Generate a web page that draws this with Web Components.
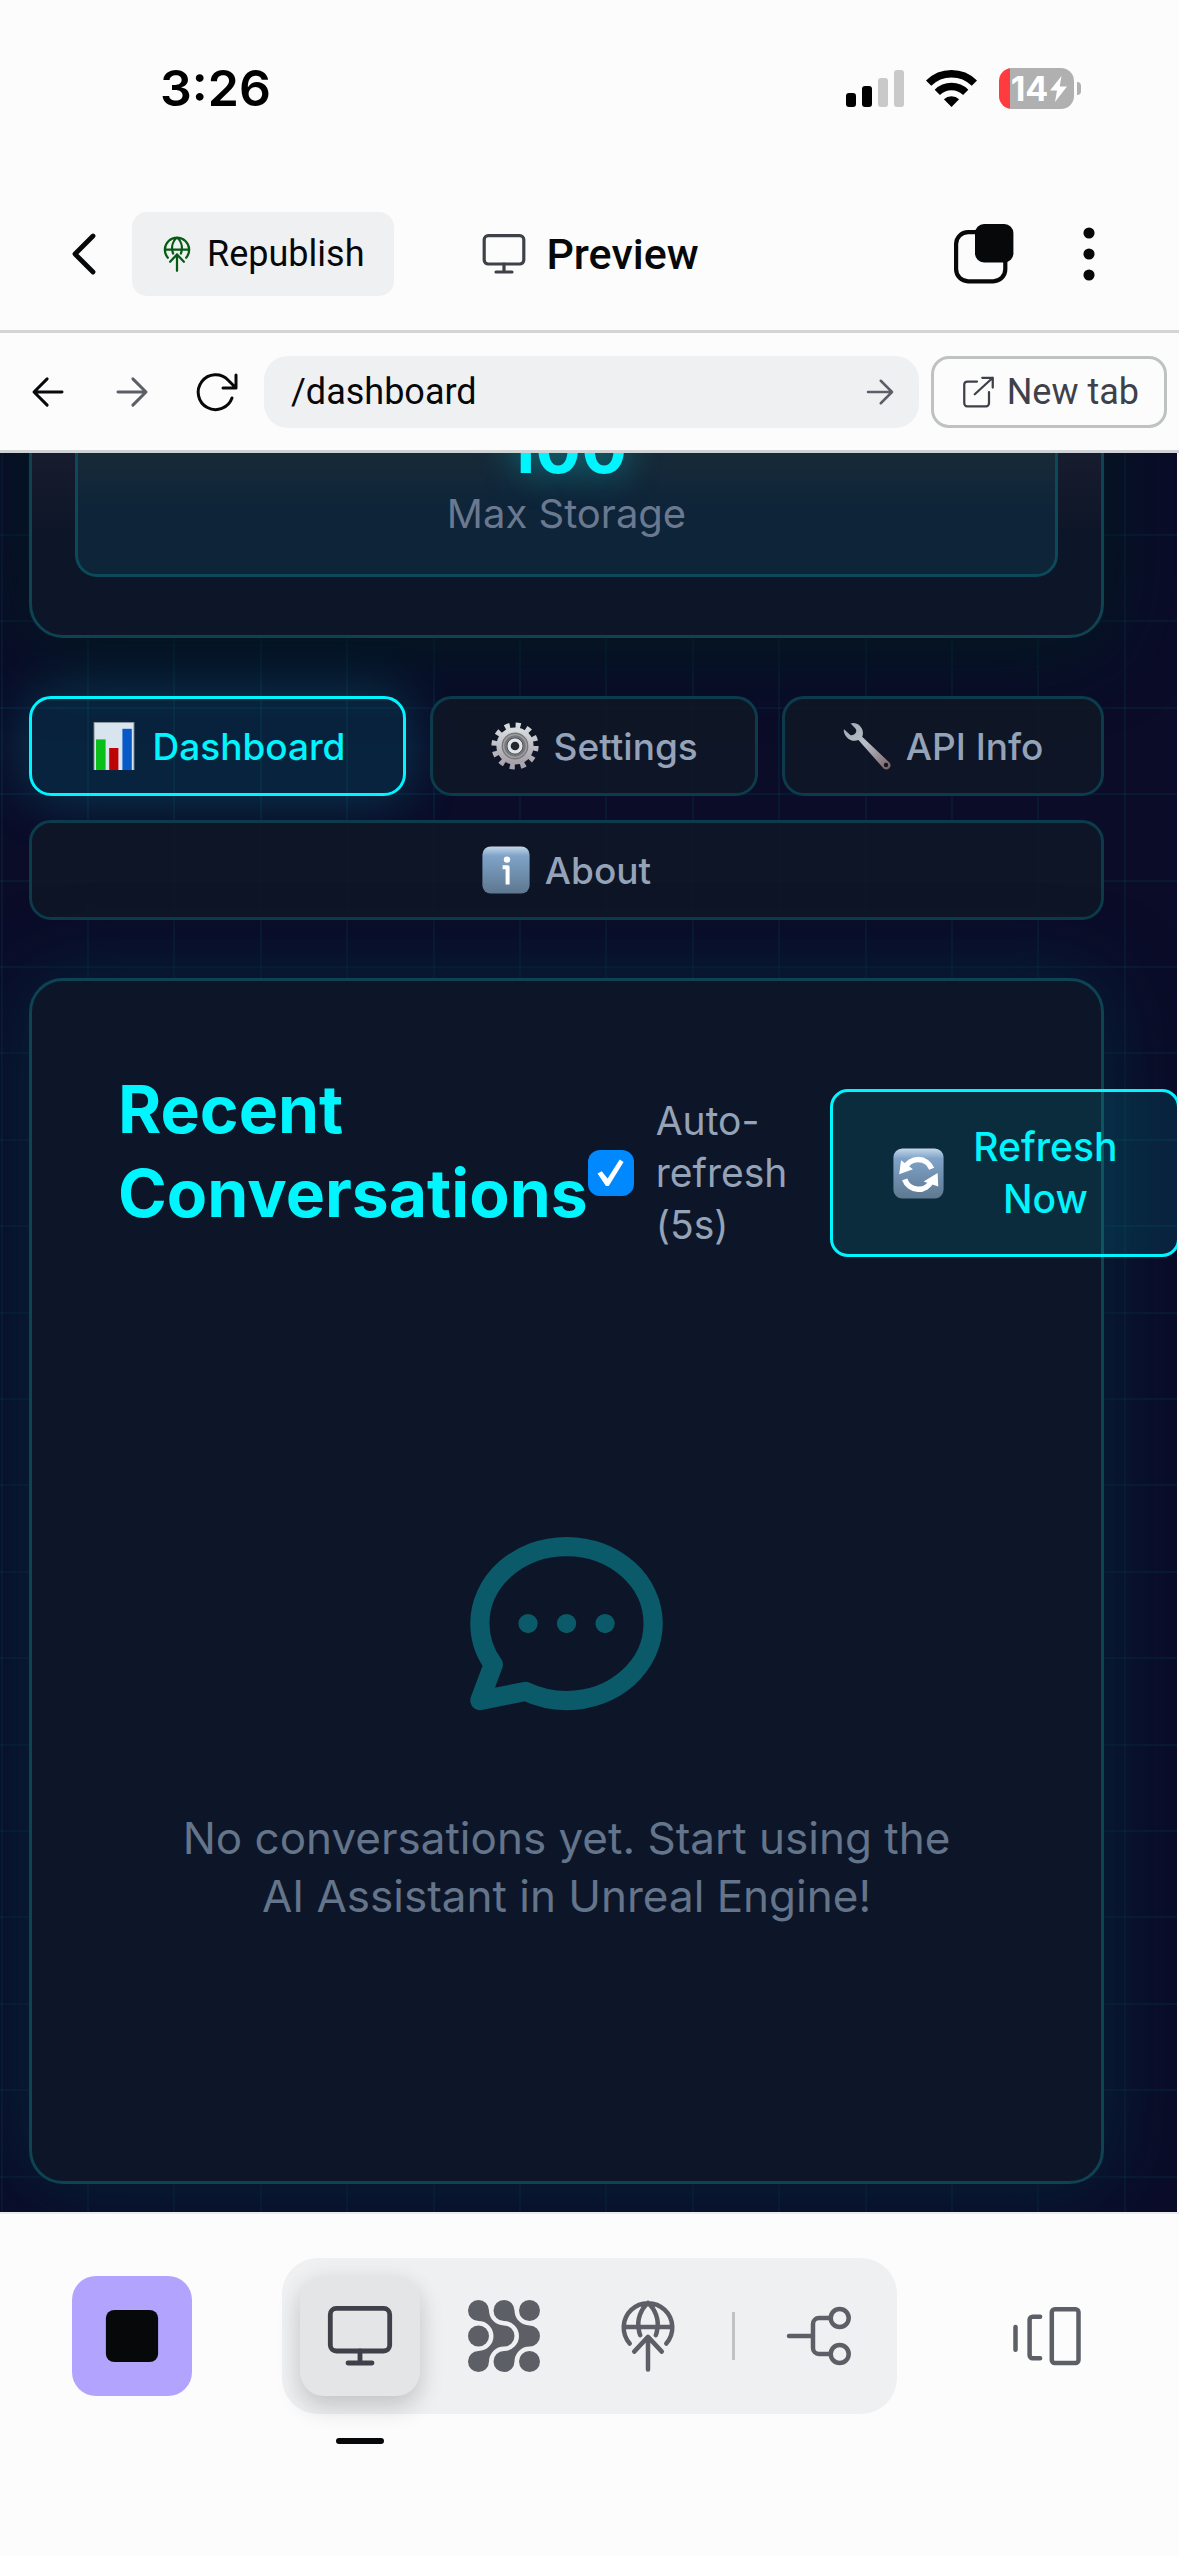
<!DOCTYPE html>
<html lang="en">
<head>
<meta charset="utf-8">
<meta name="viewport" content="width=device-width, initial-scale=1">
<title>Preview</title>
<style>
  html, body { margin: 0; }
  body { background: #fcfcfc; color: #07080a; font-family: Roboto, "Liberation Sans", sans-serif; font-size: 36px; }
</style>
</head>
<body>
<phone-shell>
  <status-bar time="3:26" battery="14"></status-bar>
  <app-header action="Republish">Preview</app-header>
  <url-bar path="/dashboard"></url-bar>
  <preview-frame>
    <stat-card value="100">Max Storage</stat-card>
    <tab-list>
      <tab-button icon="chart" active>Dashboard</tab-button>
      <tab-button icon="gear">Settings</tab-button>
      <tab-button icon="wrench">API Info</tab-button>
      <tab-button icon="info">About</tab-button>
    </tab-list>
    <conversation-panel heading="Recent Conversations">No conversations yet. Start using the AI Assistant in Unreal Engine!</conversation-panel>
  </preview-frame>
  <bottom-nav></bottom-nav>
</phone-shell>

<script>
const ICONS = {
  chevron: `<path d="M16.500 3 7.500 12l9 9" stroke-width="2.4"/>`,
  globe: `<g stroke-width="1.5"><path d="M5.9 14.5A8.1 8.1 0 1 1 18.1 14.5M3.9 9h16.2M12 1C9.6 3 8.3 6.6 8.9 9.6q.1 1.200.5 2.100M12 1c2.400 2 3.700 5.600 3.100 8.600q-.1 1.200-.5 2.100"/><path d="M12 12.300V23.200M7.400 17.200 12 12.300l4.600 4.900"/></g>`,
  monitor: `<g stroke-width="1.6"><rect x="2.100" y="2.800" width="19.800" height="14.200" rx="2"/><path d="M12 17v4M8 21h8"/></g>`,
  stack: `<rect x="2.700" y="4.700" width="16.400" height="16.400" rx="4" stroke-width="1.400"/><rect x="9" y="2" width="12.800" height="12.800" rx="3" fill="currentColor" stroke="none"/>`,
  dots: `<g fill="currentColor" stroke="none"><circle cx="12" cy="5" r="1.850"/><circle cx="12" cy="12" r="1.850"/><circle cx="12" cy="19" r="1.850"/></g>`,
  back: `<path d="M20 12H4.500M11.500 4.500 4 12l7.500 7.500" stroke-width="1.700"/>`,
  forward: `<path d="M4 12h15.500M12.500 4.500 20 12l-7.500 7.500" stroke-width="1.700"/>`,
  reload: `<path d="M20 15a8.700 8.700 0 1 1-1.900-8.900L22 10M22 3.500V10h-6.500" stroke-width="1.500"/>`,
  external: `<path d="M12 5H5.500A2 2 0 0 0 3.500 7v12.500a2 2 0 0 0 2 2H18a2 2 0 0 0 2-2V12M10.500 13.500 22.500 2.500M15.500 2.500h7v6.500" stroke-width="1.500"/>`,
  nodes: `<g fill="currentColor" stroke="none"><path d="M3.500 0A3.500 3.500 0 0 1 7 3.500 5 5 0 0 0 12 8.500 3.500 3.500 0 0 1 12 15.500 5 5 0 0 0 7 20.500 3.500 3.500 0 1 1 3.500 17 5 5 0 0 0 3.500 7 3.500 3.500 0 0 1 3.500 0z"/><path transform="translate(8.500 0)" d="M3.500 0A3.500 3.500 0 0 1 7 3.500 5 5 0 0 0 12 8.500 3.500 3.500 0 0 1 12 15.500 5 5 0 0 0 7 20.500 3.500 3.500 0 1 1 3.500 17 5 5 0 0 0 3.500 7 3.500 3.500 0 0 1 3.500 0z"/><circle cx="3.500" cy="12" r="3.500"/><circle cx="20.500" cy="3.500" r="3.500"/><circle cx="20.500" cy="20.500" r="3.500"/></g>`,
  branch: `<g stroke-width="1.500"><path d="M2 12h8M15.500 6H12a2 2 0 0 0-2 2v8a2 2 0 0 0 2 2h3.500"/><circle cx="18.900" cy="6" r="3"/><circle cx="18.900" cy="18" r="3"/></g>`,
  panels: `<g stroke-width="1.500"><path d="M1.500 9v7.600M9.700 5.600H7.200a1 1 0 0 0-1 1v11.800a1 1 0 0 0 1 1h2.500"/><rect x="13.600" y="3.100" width="8.900" height="17.900" rx="1"/></g>`,
  stop: `<rect x="3.300" y="3.300" width="17.400" height="17.400" rx="2.800" fill="currentColor" stroke="none"/>`,
  chat: `<path stroke-width="2" d="M8 12h.01M12 12h.01M16 12h.01M21 12c0 4.418-4.030 8-9 8a9.863 9.863 0 0 1-4.255-.949L3 20l1.395-3.720C3.512 15.042 3 13.574 3 12c0-4.418 4.030-8 9-8s9 3.582 9 8z"/>`,
  chart: `<g stroke="none"><rect x="1.800" y="0" width="20.400" height="24" fill="#8d979f"/><rect x="2.300" y=".5" width="19.400" height="23.500" fill="#d9e5ee"/><rect x="3" y="8.700" width="4.800" height="15.300" fill="#0abf1a"/><rect x="9.600" y="13" width="4.600" height="11" fill="#bd0505"/><rect x="16.200" y="3.400" width="4.700" height="20.600" fill="#0759c8"/></g>`,
  gear: `<defs><linearGradient id="m" x1="0" y1="0" x2="0" y2="1"><stop offset="0" stop-color="#d5dadd"/><stop offset="1" stop-color="#a8a2ab"/></linearGradient></defs><g fill="none" stroke-linecap="butt"><circle cx="12" cy="12" r="10.300" stroke="url(#m)" stroke-width="3" stroke-dasharray="2.500 2.893"/><circle cx="12" cy="12" r="7.800" stroke="url(#m)" stroke-width="3"/><circle cx="12" cy="12" r="5.400" stroke="#77777a" stroke-width="2.600"/><circle cx="12" cy="12" r="5.700" stroke="#a0a1a5" stroke-width=".7"/><circle cx="12" cy="12" r="3" stroke="#dfe4e8" stroke-width="1.700" fill="#23262d"/></g>`,
  wrench: `<defs><linearGradient id="w" x1="0" y1="0" x2="1" y2="1"><stop offset="0" stop-color="#9ba8b2"/><stop offset=".45" stop-color="#b9c0c9"/><stop offset="1" stop-color="#765c60"/></linearGradient></defs><path stroke="none" fill="url(#w)" d="M3.800.8C5 .3 7 .4 8.500 2c1.500 1.600 1.800 3.500 1.100 5.400L23.200 20.200c.9 1 .8 2-.1 2.900-1 .9-2.200.8-3-.1L7.700 9c-2 .8-4.200.3-5.700-1.300C.7 6.300.1 4.900.5 3.600l3.300 3c1 .2 2.200-.5 2.700-1.500.3-.7.1-1.400-.3-1.900z"/><circle cx="21.500" cy="21.500" r="1.100" fill="#15151d" stroke="none"/>`,
  info: `<defs><linearGradient id="i" x1="0" y1="0" x2="0" y2="1"><stop offset="0" stop-color="#c6d8e8"/><stop offset=".2" stop-color="#7fa3c8"/><stop offset="1" stop-color="#5e7890"/></linearGradient></defs><rect x=".2" y=".2" width="23.600" height="23.600" rx="4.200" fill="url(#i)" stroke="none"/><circle cx="12.500" cy="6.800" r="1.600" fill="#fff" stroke="none"/><path d="M10.300 10.600h2.500v8.700" stroke="#fff" stroke-width="2" stroke-linecap="butt"/>`,
  cycle: `<defs><linearGradient id="c" x1="0" y1="0" x2="0" y2="1"><stop offset="0" stop-color="#c6d8e8"/><stop offset=".2" stop-color="#7fa3c8"/><stop offset="1" stop-color="#5e7890"/></linearGradient></defs><rect x=".2" y=".2" width="23.600" height="23.600" rx="4.200" fill="url(#c)" stroke="none"/><path d="M5.600 9.600a6.800 6.800 0 0 1 12.600.2M18.200 15.300a6.800 6.800 0 0 1-12.700-.5" stroke="#fff" stroke-width="2.600" stroke-linecap="butt"/><path d="M3.800 5.800 2.900 12.300 9.400 10zM21 11.800l.3 6.300-6.900-2.300z" fill="#fff" stroke="none"/>`
};

class Base extends HTMLElement {
  connectedCallback() {
    if (this.shadowRoot) return;
    const t = document.createElement('template');
    t.innerHTML = `<style>*{box-sizing:border-box}button,input{font:inherit;color:inherit;margin:0;padding:0;border:0;background:none}button{display:flex;align-items:center;justify-content:center}${this.css()}</style>${this.html()}`;
    this.attachShadow({ mode: 'open' }).append(t.content.cloneNode(true));
  }
}
const define = (name, css, html) => customElements.define(name, class extends Base {
  css() { return css; }
  html() { return html(this); }
});

define('ui-icon',
  `:host{display:block;flex:none;width:var(--size,48px);height:var(--size,48px)}
   svg{display:block;width:100%;height:100%;overflow:visible}`,
  el => `<svg viewBox="0 0 24 24" fill="none" stroke="currentColor" stroke-linecap="round" stroke-linejoin="round" aria-hidden="true">${ICONS[el.getAttribute('name')]}</svg>`);

define('phone-shell',
  `:host{display:flex;flex-direction:column;min-height:100vh}
   ::slotted(preview-frame){flex:1}`,
  () => `<slot></slot>`);

define('status-bar',
  `:host{display:flex;align-items:center;justify-content:space-between;height:177px;padding:0 98px 0 160px;box-sizing:border-box;font-family:Inter,sans-serif;color:#000}
   time{font-size:50px;line-height:60px;padding-bottom:2px;font-weight:600}
   .right{display:flex;align-items:center;gap:22px}
   svg{display:block}
   .battery{display:flex;align-items:center;gap:3px}
   .cell{display:flex;align-items:center;justify-content:center;gap:2px;width:75px;height:41px;padding-left:5px;border-radius:13px;background:linear-gradient(90deg,#ff3b3f 11px,#b0b0b0 11px);color:#fff;font-size:34px;font-weight:700}
   .cap{width:4px;height:13px;border-radius:0 6px 6px 0;background:#b0b0b0}`,
  el => `<time>${el.getAttribute('time')}</time>
   <div class="right">
    <svg width="58" height="37" viewBox="0 0 58 37"><rect y="23" width="10" height="14" rx="3"/><rect x="16" y="16" width="10" height="21" rx="3"/><g fill="#c9c9c9"><rect x="32" y="8" width="10" height="29" rx="3"/><rect x="48" width="10" height="37" rx="3"/></g></svg>
    <svg width="51" height="37" viewBox="0 0 51 37"><g fill="none" stroke="#000" stroke-width="7.500"><path d="M2.600 13.200a32.500 32.500 0 0 1 45.800 0"/><path d="M11.300 22.400a20.200 20.200 0 0 1 28.400 0"/></g><path d="M25.500 37 17.900 29.300a11 11 0 0 1 15.200 0z"/></svg>
    <div class="battery"><div class="cell"><span>${el.getAttribute('battery')}</span><svg width="17" height="26" viewBox="0 0 17 26" fill="#fff"><path d="M11.500 0 0 14.500h7L5 26 17 10.500H9.700z"/></svg></div><div class="cap"></div></div>
   </div>`);

define('app-header',
  `:host{display:grid;grid-template-columns:1fr auto 1fr;align-items:center;height:156px;padding:0 48px;box-sizing:border-box;border-bottom:3px solid #d4d4d4}
   .left,.right,h1{display:flex;align-items:center}
   .left{gap:12px}
   .right{justify-content:flex-end;gap:33px;padding-right:6px}
   .tool{width:72px;height:72px}
   .publish{height:84px;padding:0 30px 0 27px;gap:12px;border-radius:15px;background:#eff0f2}
   .publish ui-icon{--size:36px;color:#075a14}
   h1{margin:0;gap:18px;font-size:43px;font-weight:500}
   h1 ui-icon{color:#3e4149}
   .stack,.dots{--size:72px;color:#07080a}`,
  el => `<div class="left"><button class="tool" aria-label="Back"><ui-icon name="chevron"></ui-icon></button>
    <button class="publish"><ui-icon name="globe"></ui-icon><span>${el.getAttribute('action')}</span></button></div>
   <h1><ui-icon name="monitor"></ui-icon><slot></slot></h1>
   <div class="right"><button class="tool" aria-label="Windows"><ui-icon class="stack" name="stack"></ui-icon></button><button class="tool" aria-label="More"><ui-icon class="dots" name="dots"></ui-icon></button></div>`);

define('url-bar',
  `:host{display:flex;align-items:center;gap:12px;height:120px;padding:0 12px;box-sizing:border-box;border-bottom:3px solid #d0d3d6}
   .tool{width:72px;height:72px;--size:42px}
   .reload{--size:48px}
   .muted{color:#5d5f67}
   .field{flex:1;min-width:0;display:flex;align-items:center;height:72px;padding:0 21px 0 27px;border-radius:24px;background:#eff0f2}
   input{flex:1;min-width:0;outline:0}
   .go{--size:36px;color:#5d5f67}
   .tab{height:72px;padding:0 25px;gap:12px;border:3px solid #bec3c2;border-radius:18px;color:#3e4149;--size:36px}`,
  el => `<button class="tool" aria-label="Go back"><ui-icon name="back"></ui-icon></button>
   <button class="tool muted" aria-label="Go forward"><ui-icon name="forward"></ui-icon></button>
   <button class="tool reload" aria-label="Reload"><ui-icon name="reload"></ui-icon></button>
   <div class="field"><input type="text" aria-label="Path" value="${el.getAttribute('path')}"><button class="go" aria-label="Go"><ui-icon name="forward"></ui-icon></button></div>
   <button class="tab"><ui-icon name="external"></ui-icon><span>New tab</span></button>`);

/* Grid tile is 432px wide and holds five lines. */
const line = 'rgba(0,245,255,.05)';
const stops = [1, 87, 173, 260, 346].map(p => `transparent ${p}px,${line} ${p}px,${line} ${p + 2}px,transparent ${p + 2}px`).join(',');
define('preview-frame',
  `:host{display:flex;flex-direction:column;margin-right:2px;padding:0 73px 28px 29px;box-sizing:border-box;overflow:hidden;font-family:Inter,"Liberation Sans",sans-serif;color:#94a3b8;
     background:linear-gradient(90deg,${stops}) 0 0/432px 432px,linear-gradient(180deg,${stops}) 0 -6px/432px 432px,#0a0c28}`,
  () => `<slot></slot>`);

define('stat-card',
  `:host{display:block;margin-top:-127px;padding:42px 43px 58px;border:3px solid #0d4352;border-radius:34px;background:linear-gradient(180deg,#171c2e 124px,#0d1628 204px);box-shadow:0 10px 80px rgba(2,28,32,.95)}
   .stat{display:flex;flex-direction:column;align-items:center;padding:34px;border:3px solid #0b4a58;border-radius:22px;background:linear-gradient(180deg,#162a38 84px,#0e2438 134px)}
   strong{font-size:68px;line-height:80px;font-weight:700;color:#00f5ff;text-shadow:0 0 34px rgba(0,245,255,.5)}
   span{font-size:40px;line-height:52px;color:#6a7890}`,
  el => `<div class="stat"><strong>${el.getAttribute('value')}</strong><span><slot></slot></span></div>`);

define('tab-list',
  `:host{display:flex;flex-wrap:wrap;gap:24px;margin:58px 0}
   ::slotted(*){flex:1 1 auto}`,
  () => `<slot></slot>`);

define('tab-button',
  `:host{display:block}
   button{width:100%;height:100px;padding:0 48px;gap:15px;border:3px solid #0c3c4b;border-radius:22px;background:rgba(15,23,38,.88);font-size:37px;font-weight:500;--size:48px}
   :host([active]) button{border-color:#00f5ff;background:rgba(0,245,255,.1);color:#00f5ff;box-shadow:0 0 60px rgba(0,245,255,.22)}`,
  el => `<button><ui-icon name="${el.getAttribute('icon')}"></ui-icon><span><slot></slot></span></button>`);

define('conversation-panel',
  `:host{display:block;padding:86px;border:3px solid #0d4352;border-radius:34px;background:#0d1628;box-shadow:0 0 80px rgba(6,40,60,.9)}
   header{display:flex;align-items:center;margin-bottom:59px}
   h2{flex:none;width:min-content;margin:0 0 44px;font-size:66px;line-height:84px;font-weight:700;color:#00f5ff}
   .controls{flex:none;display:flex;align-items:center;gap:43px;font-size:39px;line-height:52px}
   label{display:flex;align-items:center;gap:22px}
   label span,button span{width:min-content}
   input{appearance:none;display:grid;place-items:center;flex:none;width:46px;height:46px;border-radius:12px;background:#08f}
   input::before{content:"";width:28px;height:28px;background:#fff;clip-path:polygon(3% 52%,18% 44%,39% 70%,82% 2%,96% 11%,43% 96%,33% 96%)}
   button{padding:29px 60px;gap:29px;border:3px solid #00f5ff;border-radius:18px;background:rgba(0,245,255,.1);color:#00f5ff;font-weight:500;text-align:center;--size:51px}
   .empty{display:flex;flex-direction:column;align-items:center;gap:70px;padding:170px 60px;color:#64748b;font-size:44px;line-height:58px;text-align:center}
   .empty ui-icon{--size:231px;color:#0b5a6a}
   p{margin:0}`,
  el => `<header><h2>${el.getAttribute('heading')}</h2><div class="controls">
     <label><input type="checkbox" checked><span>Auto-refresh (5s)</span></label>
     <button><ui-icon name="cycle"></ui-icon><span>Refresh Now</span></button></div></header>
   <div class="empty"><ui-icon name="chat"></ui-icon><p><slot></slot></p></div>`);

define('bottom-nav',
  `:host{display:flex;align-items:flex-start;justify-content:space-between;height:344px;padding:44px 72px 0;box-sizing:border-box;border-top:2px solid #e8eaed;color:#5d5f67;--size:72px}
   button{width:120px;height:120px;border-radius:24px}
   .side{margin-top:18px}
   .stop{background:#b2a3ff;color:#07080a}
   nav{display:flex;align-items:center;gap:24px;height:156px;padding:18px;border-radius:36px;background:#eff0f2}
   .current{position:relative;background:#e4e5e7;color:#3e4149;box-shadow:0 12px 24px rgba(0,0,0,.16),0 0 24px rgba(0,0,0,.04)}
   .current::after{content:"";position:absolute;left:36px;top:162px;width:48px;height:6px;border-radius:3px;background:#07080a}
   hr{width:3px;height:48px;margin:0;border:0;background:#c1c2c4}`,
  () => `<button class="side stop" aria-label="Stop"><ui-icon name="stop"></ui-icon></button>
   <nav><button class="current" aria-label="Preview"><ui-icon name="monitor"></ui-icon></button><button aria-label="Agent"><ui-icon name="nodes"></ui-icon></button><button aria-label="Publish"><ui-icon name="globe"></ui-icon></button><hr><button aria-label="Branches"><ui-icon name="branch"></ui-icon></button></nav>
   <button class="side" aria-label="Panels"><ui-icon name="panels"></ui-icon></button>`);
</script>
</body>
</html>
